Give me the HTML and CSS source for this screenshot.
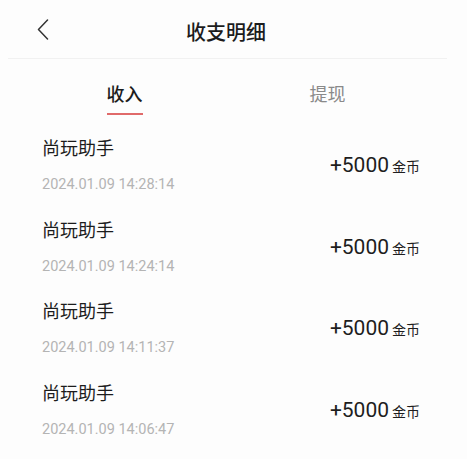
FILE: index.html
```html
<!DOCTYPE html>
<html lang="zh-CN">
<head>
    <meta charset="UTF-8">
    <meta name="viewport" content="width=device-width, initial-scale=1.0">
    <title>收支明细</title>
    <link rel="stylesheet" href="styles.css">
</head>
<body>
    <div class="header">
        <span class="back">
            <svg width="12" height="21" viewBox="0 0 12 21"><path d="M10.5 1 L1.5 10.5 L10.5 20" fill="none" stroke="#333" stroke-width="1.5" stroke-linecap="round" stroke-linejoin="round"/></svg>
        </span>
        <span class="title">收支明细</span>
        <span></span>
    </div>
    <div class="divider"></div>

    <div class="tabs">
        <div class="tab active"><span>收入</span></div>
        <div class="tab"><span>提现</span></div>
    </div>

    <div class="list">
        <div class="row">
            <div class="info">
                <div class="name">尚玩助手</div>
                <div class="time">2024.01.09 14:28:14</div>
            </div>
            <div class="amount">+5000<span class="unit">金币</span></div>
        </div>
        <div class="row">
            <div class="info">
                <div class="name">尚玩助手</div>
                <div class="time">2024.01.09 14:24:14</div>
            </div>
            <div class="amount">+5000<span class="unit">金币</span></div>
        </div>
        <div class="row">
            <div class="info">
                <div class="name">尚玩助手</div>
                <div class="time">2024.01.09 14:11:37</div>
            </div>
            <div class="amount">+5000<span class="unit">金币</span></div>
        </div>
        <div class="row">
            <div class="info">
                <div class="name">尚玩助手</div>
                <div class="time">2024.01.09 14:06:47</div>
            </div>
            <div class="amount">+5000<span class="unit">金币</span></div>
        </div>
    </div>
</body>
</html>
```

FILE: styles.css
```css
body {
    margin: 0;
    background-color: #fdfdfd;
    font-family: "Noto Sans CJK SC", Roboto, sans-serif;
    color: #1c1c1c;
}
.header {
    display: grid;
    grid-template-columns: 1fr auto 1fr;
    align-items: center;
    height: 52px;
    padding: 6px 52px 0 37px;
}
.back {
    margin-top: -6px;
}
.back svg {
    display: block;
}
.title {
    font-size: 20px;
    font-weight: 500;
    line-height: 28px;
}
.divider {
    height: 1px;
    margin: 0 20px 0 8px;
    background-color: #f1f1f1;
}
.tabs {
    display: grid;
    grid-template-columns: 1fr 1fr;
    padding: 22px 38px 0 23px;
    height: 43px;
}
.tab {
    text-align: center;
    font-size: 18px;
    line-height: 24px;
    color: #8a8a8a;
}
.tab span {
    display: inline-block;
    padding-bottom: 8px;
}
.tab.active {
    color: #1c1c1c;
    font-weight: 500;
}
.tab.active span {
    border-bottom: 2px solid #e06a6a;
}
.row {
    display: flex;
    align-items: center;
    justify-content: space-between;
    height: 81.7px;
    padding: 0 47px 0 42px;
}
.name {
    font-size: 18px;
    line-height: 24px;
}
.time {
    margin-top: 16px;
    font-family: Roboto, sans-serif;
    font-size: 14.5px;
    line-height: 20px;
    color: #b4b4b4;
}
.amount {
    font-family: Roboto, sans-serif;
    font-size: 21px;
    color: #1e1e1e;
}
.unit {
    margin-left: 3px;
    font-family: "Noto Sans CJK SC", sans-serif;
    font-size: 14px;
}
```
